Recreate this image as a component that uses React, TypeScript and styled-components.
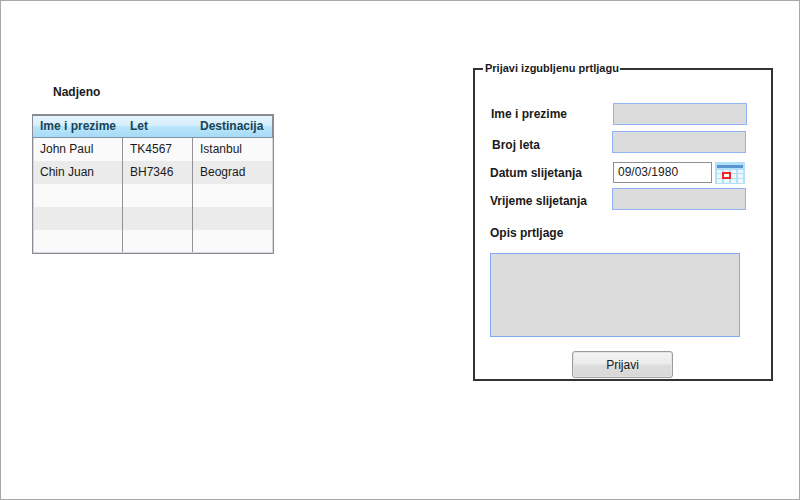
import React from "react";
import styled, { createGlobalStyle } from "styled-components";

const GlobalStyle = createGlobalStyle`
  * { box-sizing: border-box; }
  body { margin: 0; }
`;

const Page = styled.main`
  width: 800px;
  height: 500px;
  display: flex;
  justify-content: space-between;
  align-items: flex-start;
  padding: 60px 26px 0 31px;
  border: 1px solid #a8a8a8;
  background: #fff;
  color: #1a1a1a;
  font: 12px/16px "Liberation Sans", Arial, sans-serif;
`;

const Results = styled.section`
  width: 242px;
  padding-top: 23px;
`;

const Heading = styled.h2`
  margin: 0 0 14px 21px;
  font-size: 12px;
  line-height: 16px;
`;

const Table = styled.div`
  height: 140px;
  border: 1px solid #8b8c96;
  border-top-width: 2px;
`;

const columns = "89px 70px 1fr";

const HeaderRow = styled.div`
  display: grid;
  grid-template-columns: ${columns};
  height: 22px;
  padding-left: 1px;
  border-right: 1px solid #8b8c96;
  border-bottom: 1px solid #7d94a2;
  background: linear-gradient(#e7f5fd 0, #d4eefc 45%, #bbe5fb 50%, #a6dbf8 100%);
  color: #174454;
  font-weight: bold;
`;

const HeaderCell = styled.div`
  padding: 2px 0 0 7px;
  white-space: nowrap;
  &:first-child { padding-left: 6px; }
`;

const TableBody = styled.div`
  height: 115px;
  border: solid #d5d5de;
  border-width: 0 1px 1px;
`;

const Row = styled.div`
  display: grid;
  grid-template-columns: ${columns};
  height: 23px;
  background: #fafafa;
  &:nth-child(even) { background: #ebebeb; }
  &:last-child { height: 22px; }
`;

const Cell = styled.div`
  padding: 3px 0 0 7px;
  border-right: 1px solid #929298;
  white-space: nowrap;
  &:first-child { padding-left: 6px; }
  &:last-child { border-right: 0; }
`;

const Report = styled.form`
  width: 300px;
`;

const Fieldset = styled.fieldset`
  height: 320px;
  min-width: 0;
  margin: 0;
  padding: 26px 0 0 15px;
  border: 2px solid #333336;
`;

const Legend = styled.legend`
  height: 16px;
  margin-left: -7px;
  padding: 0 1px 0 2px;
  font-size: 11px;
  font-weight: bold;
  line-height: 14px;
  white-space: nowrap;
`;

const Field = styled.div<{ $gap: number; $indent?: number }>`
  display: flex;
  height: 22px;
  margin-bottom: ${({ $gap }) => $gap}px;
  padding-left: ${({ $indent = 0 }) => $indent}px;
`;

const Label = styled.label<{ $width?: number; $drop?: number; $spacing?: number }>`
  display: block;
  flex: none;
  width: ${({ $width }) => ($width ? `${$width}px` : "auto")};
  padding-top: ${({ $drop = 3 }) => $drop}px;
  font-weight: bold;
  letter-spacing: ${({ $spacing = 0 }) => $spacing}px;
  white-space: nowrap;
`;

const Input = styled.input`
  width: 134px;
  height: 22px;
  padding: 0 5px;
  border: 1px solid #91b3f6;
  border-radius: 0;
  background: #dcdcdc;
  font: inherit;
`;

const DateInput = styled(Input)`
  width: 99px;
  height: 21px;
  padding: 0 4px 1px;
  border-color: #909090;
  background: #fff;
  color: #1a1a1a;
`;

const CalendarSvg = styled.svg`
  width: 30px;
  height: 22px;
  margin-left: 3px;
`;

const Description = styled.textarea`
  display: block;
  width: 250px;
  height: 84px;
  margin-top: 12px;
  border: 1px solid #83a9f3;
  border-radius: 0;
  background: #dcdcdc;
  resize: none;
`;

const Submit = styled.button`
  display: block;
  width: 101px;
  height: 27px;
  margin: 14px 0 0 82px;
  padding: 0;
  border: 1px solid #999ca1;
  border-radius: 3px;
  background: linear-gradient(#f4f4f4 0, #ebebeb 48%, #dddddd 52%, #d8d8d8 100%);
  box-shadow: inset 0 0 0 1px #e4e4e4;
  color: #1a1a1a;
  font: 12px/16px "Liberation Sans", Arial, sans-serif;
`;

const people = [
  ["John Paul", "TK4567", "Istanbul"],
  ["Chin Juan", "BH7346", "Beograd"],
  ["", "", ""],
  ["", "", ""],
  ["", "", ""],
];

function CalendarIcon() {
  return (
    <CalendarSvg viewBox="0 0 30 22" aria-hidden="true">
      <rect width="30" height="22" fill="#b2e0fb" />
      <rect x="2" y="3" width="26" height="3" fill="#5b95cf" />
      {[8, 12, 17].map((y) =>
        [2, 9, 16, 23].map((x) => (
          <rect key={`${x}-${y}`} x={x} y={y} width="5" height={y === 8 ? 3 : 4} fill="#eef9ff" />
        )),
      )}
      <rect x="8" y="11" width="7" height="5" fill="#fff" stroke="#f32626" strokeWidth="2" />
    </CalendarSvg>
  );
}

export default function App() {
  return (
    <>
      <GlobalStyle />
      <Page>
        <Results>
          <Heading>Nadjeno</Heading>
          <Table>
            <HeaderRow>
              <HeaderCell>Ime i prezime</HeaderCell>
              <HeaderCell>Let</HeaderCell>
              <HeaderCell>Destinacija</HeaderCell>
            </HeaderRow>
            <TableBody>
              {people.map((person, index) => (
                <Row key={index}>
                  {person.map((value, column) => <Cell key={column}>{value}</Cell>)}
                </Row>
              ))}
            </TableBody>
          </Table>
        </Results>
        <Report>
          <Fieldset>
            <Legend>Prijavi izgubljenu prtljagu</Legend>
            <Field $gap={6} $indent={1}>
              <Label $width={122}>Ime i prezime</Label>
              <Input aria-label="Ime i prezime" />
            </Field>
            <Field $gap={9} $indent={2}>
              <Label $width={120} $drop={6}>Broj leta</Label>
              <Input aria-label="Broj leta" />
            </Field>
            <Field $gap={4}>
              <Label $width={123}>Datum slijetanja</Label>
              <DateInput defaultValue="09/03/1980" aria-label="Datum slijetanja" />
              <CalendarIcon />
            </Field>
            <Field $gap={15}>
              <Label $width={122} $drop={5} $spacing={-0.03}>Vrijeme slijetanja</Label>
              <Input aria-label="Vrijeme slijetanja" />
            </Field>
            <Label $drop={0}>Opis prtljage</Label>
            <Description aria-label="Opis prtljage" />
            <Submit type="button">Prijavi</Submit>
          </Fieldset>
        </Report>
      </Page>
    </>
  );
}
